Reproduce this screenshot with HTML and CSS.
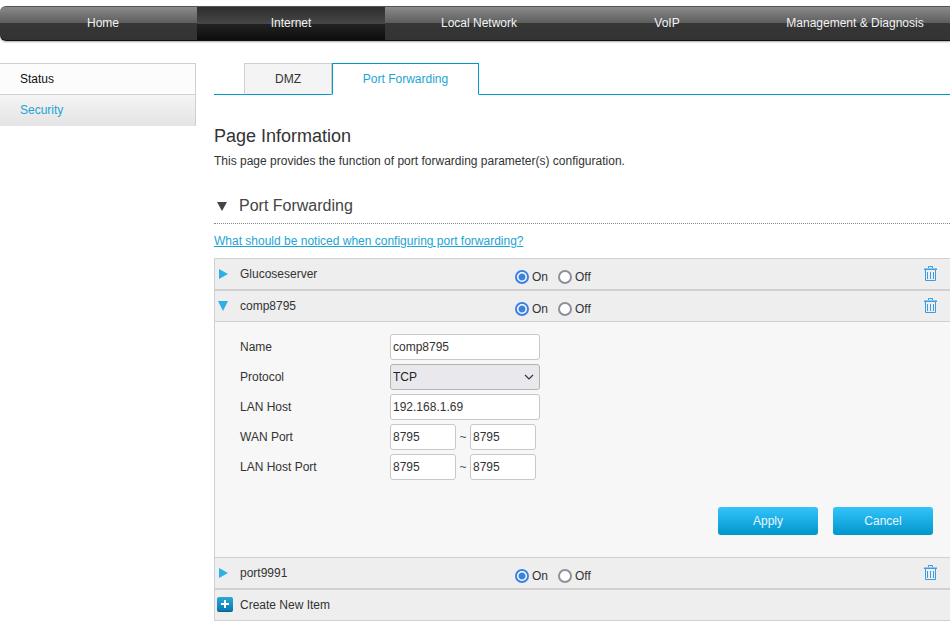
FILE: index.html
```html
<!DOCTYPE html>
<html lang="en">
<head>
  <meta charset="UTF-8" />
  <title>Port Forwarding</title>
  <link rel="stylesheet" href="styles.css">
</head>
<body>
  <svg class="icon-defs" width="0" height="0">
    <symbol id="trash" viewBox="0 0 13 15">
      <path d="M4.500 2V.5h4V2M0 3h13M1.500 4v10.500h10V4M3.500 6v7M6.500 6v7M9.500 6v7" fill="none" stroke="#3a9be6" stroke-width="1" />
      <path d="M0 3.500h13" stroke="#3a9be6" stroke-width="1" />
    </symbol>
  </svg>

  <nav class="topnav">
    <a href="#">Home</a>
    <a href="#" class="active">Internet</a>
    <a href="#">Local Network</a>
    <a href="#">VoIP</a>
    <a href="#">Management &amp; Diagnosis</a>
  </nav>

  <div class="page">
    <aside class="sidebar">
      <a href="#" class="side-current">Status</a>
      <a href="#" class="side-other">Security</a>
    </aside>

    <main class="content">
      <div class="tabs">
        <a href="#" class="tab">DMZ</a>
        <a href="#" class="tab tab-active">Port Forwarding</a>
      </div>

      <h1>Page Information</h1>
      <p class="intro">This page provides the function of port forwarding parameter(s) configuration.</p>

      <h2 class="section-title"><span class="section-arrow"></span>Port Forwarding</h2>
      <a href="#" class="notice">What should be noticed when configuring port forwarding?</a>

      <div class="list">
        <div class="row">
          <span class="arrow-right"></span>
          <span class="row-name">Glucoseserver</span>
          <label class="radio"><input type="radio" name="r1" checked>On</label>
          <label class="radio"><input type="radio" name="r1">Off</label>
          <svg class="trash"><use href="#trash" /></svg>
        </div>
        <div class="row row-thick">
          <span class="arrow-down"></span>
          <span class="row-name">comp8795</span>
          <label class="radio"><input type="radio" name="r2" checked>On</label>
          <label class="radio"><input type="radio" name="r2">Off</label>
          <svg class="trash"><use href="#trash" /></svg>
        </div>
        <div class="panel">
          <div class="form-row">
            <label>Name</label>
            <input type="text" class="field" value="comp8795">
          </div>
          <div class="form-row">
            <label>Protocol</label>
            <select class="field"><option>TCP</option><option>UDP</option></select>
          </div>
          <div class="form-row">
            <label>LAN Host</label>
            <input type="text" class="field" value="192.168.1.69">
          </div>
          <div class="form-row">
            <label>WAN Port</label>
            <input type="text" class="field port" value="8795">
            <span class="tilde">~</span>
            <input type="text" class="field port" value="8795">
          </div>
          <div class="form-row">
            <label>LAN Host Port</label>
            <input type="text" class="field port" value="8795">
            <span class="tilde">~</span>
            <input type="text" class="field port" value="8795">
          </div>
          <div class="actions">
            <button class="btn">Apply</button>
            <button class="btn">Cancel</button>
          </div>
        </div>
        <div class="row">
          <span class="arrow-right"></span>
          <span class="row-name">port9991</span>
          <label class="radio"><input type="radio" name="r3" checked>On</label>
          <label class="radio"><input type="radio" name="r3">Off</label>
          <svg class="trash"><use href="#trash" /></svg>
        </div>
        <div class="row row-thick row-new">
          <span class="plus"></span>
          <span class="row-name">Create New Item</span>
        </div>
      </div>
    </main>
  </div>
</body>
</html>
```

FILE: styles.css
```css
* {
  box-sizing: border-box;
}

body {
  margin: 0;
  width: 950px;
  background: #fff;
  font-family: "Liberation Sans", Arial, sans-serif;
  font-size: 12px;
  color: #333;
  overflow: hidden;
}

a {
  text-decoration: none;
}

.icon-defs {
  position: absolute;
}

/* top menu */
.topnav {
  display: flex;
  height: 35px;
  margin-top: 6px;
  padding-left: 9px;
  border-top: 1px solid #555;
  border-bottom: 1px solid #111;
  border-radius: 6px 0 0 6px;
  background: linear-gradient(#8a8a8a 0, #5c5c5c 50%, #353636 50%, #333 100%);
  box-shadow: 0 1px 2px #aaa;
}

.topnav a {
  width: 188px;
  line-height: 32px;
  text-align: center;
  color: #f2f2f2;
}

.topnav a.active {
  background: linear-gradient(#2e2e2e 0, #464646 50%, #222 52%, #0c0c0c 100%);
}

.page {
  display: flex;
  margin-top: 22px;
}

/* left menu */
.sidebar {
  width: 196px;
  height: 63px;
  flex: none;
  border: 1px solid #d0d0d0;
  border-left: none;
}

.sidebar a {
  display: block;
  height: 31px;
  padding-left: 20px;
  line-height: 30px;
}

.side-current {
  background: #fcfcfc;
  color: #111;
  border-bottom: 1px solid #d0d0d0;
}

.side-other {
  background: linear-gradient(#f4f4f4, #e4e4e4);
  color: #1ba5d4;
}

.content {
  width: 736px;
  margin-left: 18px;
}

.tabs {
  display: flex;
  height: 32px;
  padding-left: 30px;
  border-bottom: 1px solid #0099cc;
}

.tab {
  width: 88px;
  height: 32px;
  text-align: center;
  line-height: 30px;
  background: #f4f4f4;
  color: #333;
  border: 1px solid #d0d0d0;
  border-bottom: 1px solid #0099cc;
}

.tab-active {
  width: 147px;
  background: #fff;
  color: #1ba5d4;
  border: 1px solid #0099cc;
  border-bottom: 1px solid #fff;
}

h1 {
  margin: 30px 0 0;
  font-size: 18px;
  font-weight: normal;
  line-height: 22px;
}

.intro {
  margin: 6px 0 0;
  line-height: 16px;
}

.section-title {
  display: flex;
  align-items: center;
  height: 33px;
  margin: 22px 0 0;
  padding-bottom: 3px;
  font-size: 16px;
  font-weight: normal;
  color: #444;
  border-bottom: 1px dotted #888;
}

.section-arrow {
  width: 0;
  height: 0;
  margin: 2px 12px 0 3px;
  border-left: 5.5px solid transparent;
  border-right: 5.5px solid transparent;
  border-top: 9px solid #444;
}

.notice {
  display: block;
  margin-top: 9px;
  line-height: 16px;
  color: #1ba5d4;
  text-decoration: underline;
}

.list {
  margin-top: 9px;
  border-left: 1px solid #d0d0d0;
}

/* rows: 1px border next to the panel, 2px between two rows */
.row {
  display: flex;
  height: 31px;
  padding-left: 25px;
  background: #eee;
  border-top: 1px solid #d0d0d0;
  position: relative;
}

.row-thick {
  height: 32px;
  border-top-width: 2px;
}

.row-name {
  width: 275px;
  margin-top: 8px;
}

.arrow-right,
.arrow-down {
  position: absolute;
  width: 0;
  height: 0;
  top: 10px;
}

.arrow-right {
  left: 4px;
  border-top: 5px solid transparent;
  border-bottom: 5px solid transparent;
  border-left: 9px solid #30aee6;
}

.arrow-down {
  left: 3px;
  border-left: 5px solid transparent;
  border-right: 5px solid transparent;
  border-top: 10px solid #30aee6;
}

.radio {
  display: flex;
  align-items: center;
  height: 14px;
  margin: 11px 10px 0 0;
}

.radio input {
  appearance: none;
  width: 14px;
  height: 14px;
  margin: 0 3px 0 0;
  border: 2px solid #8f8f9d;
  border-radius: 50%;
  background: #fff;
}

.radio input:checked {
  border-color: #3b82e0;
  background: radial-gradient(circle, #3b82e0 0, #3b82e0 3px, #fff 4px);
}

.trash {
  position: absolute;
  right: 13px;
  top: 7px;
  width: 13px;
  height: 15px;
}

.panel {
  height: 236px;
  padding: 12px 0 0 25px;
  background: #f7f7f7;
  border-top: 1px solid #d0d0d0;
}

.form-row {
  display: flex;
  align-items: center;
  height: 26px;
  margin-bottom: 4px;
}

.form-row label {
  width: 150px;
}

.field {
  width: 150px;
  height: 26px;
  padding: 0 2px;
  font: 12px "Liberation Sans", Arial, sans-serif;
  color: #333;
  border: 1px solid #c8c8c8;
  border-radius: 3px;
  background: #fff;
}

select.field {
  appearance: none;
  border-color: #b4b4b4;
  background: #e9e9ed url("data:image/svg+xml,%3Csvg xmlns='http://www.w3.org/2000/svg' width='10' height='6'%3E%3Cpath d='M1 1l4 4 4-4' fill='none' stroke='%23333' stroke-width='1.200'/%3E%3C/svg%3E") no-repeat right 5px center;
  color: #222;
}

.port {
  width: 66px;
}

.tilde {
  width: 14px;
  text-align: center;
  color: #555;
}

.actions {
  display: flex;
  justify-content: flex-end;
  gap: 15px;
  margin-top: 27px;
  padding-right: 17px;
}

.btn {
  width: 100px;
  height: 28px;
  border: none;
  border-radius: 3px;
  background: linear-gradient(#33c4fb, #0096cb);
  color: #e6f7ff;
  font: 12px "Liberation Sans", Arial, sans-serif;
}

.row-new {
  height: 33px;
  border-bottom: 1px solid #d0d0d0;
}

.plus {
  position: absolute;
  left: 2px;
  top: 7px;
  width: 16px;
  height: 15px;
  border-radius: 2px;
  border-bottom: 1px solid #0a5f90;
  background:
    linear-gradient(#fff, #fff) center / 8px 2px no-repeat,
    linear-gradient(#fff, #fff) center / 2px 8px no-repeat,
    linear-gradient(#2aa8dc, #0a78b0);
}
```
